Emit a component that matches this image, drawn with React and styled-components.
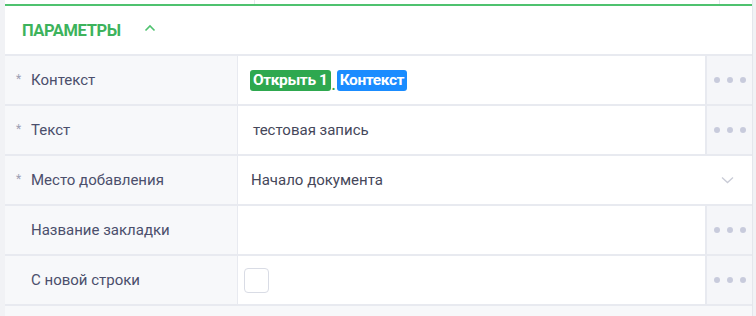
import React from 'react';
import styled, { createGlobalStyle } from 'styled-components';

const GlobalStyle = createGlobalStyle`
    html, body {
        margin: 0;
        padding: 0;
        background: #ffffff;
    }
    body {
        font-family: Roboto, "Noto Sans", sans-serif;
    }
`;

const Page = styled.div`
    display: flex;
    width: 756px;
    height: 316px;
    overflow: hidden;
    background: #f1f2f5;
`;

const Panel = styled.div`
    flex: 1;
    margin: 0 3px 0 5px;
    display: flex;
    flex-direction: column;
    background: #f7f8fa;
    border-right: 1px solid #e4e6ec;
`;

const PrevRow = styled.div`
    display: grid;
    grid-template-columns: 250px 465px 1fr;
    height: 4px;
    background: #ffffff;
`;

const PrevCell = styled.div`
    border-right: ${p => (p.$last ? 'none' : '1px solid #e6e8ee')};
`;

const Header = styled.div`
    display: flex;
    align-items: center;
    gap: 23px;
    height: 48px;
    padding-left: 17px;
    background: #ffffff;
    border-top: 2px solid #4fc26f;
`;

const Title = styled.span`
    font-size: 16.5px;
    font-weight: 700;
    color: #3db35c;
    letter-spacing: -0.4px;
`;

const Caret = styled.svg`
    width: 12px;
    height: 8px;
    margin-top: -4px;
`;

const Row = styled.div`
    display: grid;
    grid-template-columns: 232px 1fr ${p => (p.$wide ? '0px' : '47px')};
    height: 48px;
    border-top: 2px solid #e8eaf0;
`;

const LabelCell = styled.div`
    display: flex;
    align-items: center;
    background: #f7f8fa;
    padding-left: 11px;
    font-size: 15px;
    color: #4b4f6c;
`;

const Star = styled.span`
    width: 15px;
    font-size: 12px;
    color: #9da0b4;
    margin-top: -2px;
`;

const ValueCell = styled.div`
    display: flex;
    align-items: center;
    justify-content: space-between;
    background: #ffffff;
    border-left: 1px solid #e8eaf0;
    padding-left: ${p => p.$pad || 15}px;
    padding-right: 18px;
    font-size: 15px;
    color: #45475a;
`;

const MoreCell = styled.div`
    display: flex;
    align-items: center;
    justify-content: center;
    gap: 7px;
    background: #f5f6f9;
    border-left: 2px solid #e8eaf0;
`;

const Dot = styled.span`
    width: 6px;
    height: 6px;
    border-radius: 50%;
    background: #c8cbdc;
`;

const Tags = styled.div`
    display: flex;
    align-items: flex-end;
`;

const Tag = styled.span`
    display: inline-block;
    padding: 2px 3px 2px 3px;
    border-radius: 3px;
    font-size: 15.5px;
    font-weight: 700;
    line-height: 17px;
    color: #ffffff;
    background: ${p => p.$color};
    letter-spacing: -0.4px;
`;

const Sep = styled.span`
    color: #2ea84f;
    font-size: 14px;
    font-weight: 700;
    line-height: 12px;
    margin: 0 1px;
`;

const Checkbox = styled.span`
    width: 23px;
    height: 23px;
    border: 1px solid #d9dce5;
    border-radius: 4px;
    background: #ffffff;
`;

const Footer = styled.div`
    flex: 1;
    border-top: 2px solid #e8eaf0;
    background: #f7f8fa;
`;

const More = () => (
    <MoreCell>
        <Dot />
        <Dot />
        <Dot />
    </MoreCell>
);

const App = () => {
    return (
        <>
            <GlobalStyle />
            <Page>
                <Panel>
                    <PrevRow>
                        <PrevCell />
                        <PrevCell />
                        <PrevCell $last />
                    </PrevRow>
                    <Header>
                        <Title>ПАРАМЕТРЫ</Title>
                        <Caret viewBox="0 0 12 8">
                            <path d="M1.5 6.5 L6 2 L10.5 6.5" fill="none" stroke="#4fc26f" strokeWidth="1.6" />
                        </Caret>
                    </Header>
                    <Row>
                        <LabelCell><Star>*</Star>Контекст</LabelCell>
                        <ValueCell $pad={12}>
                            <Tags>
                                <Tag $color="#2ea84f">Открыть 1</Tag>
                                <Sep>.</Sep>
                                <Tag $color="#1a8cff">Контекст</Tag>
                            </Tags>
                        </ValueCell>
                        <More />
                    </Row>
                    <Row>
                        <LabelCell><Star>*</Star>Текст</LabelCell>
                        <ValueCell>тестовая запись</ValueCell>
                        <More />
                    </Row>
                    <Row $wide>
                        <LabelCell><Star>*</Star>Место добавления</LabelCell>
                        <ValueCell $pad={13}>
                            Начало документа
                            <svg width="13" height="8" viewBox="0 0 13 8">
                                <path d="M1 1.5 L6.5 6.5 L12 1.5" fill="none" stroke="#c9cbd6" strokeWidth="1.3" />
                            </svg>
                        </ValueCell>
                    </Row>
                    <Row>
                        <LabelCell><Star />Название закладки</LabelCell>
                        <ValueCell />
                        <More />
                    </Row>
                    <Row>
                        <LabelCell><Star />С новой строки</LabelCell>
                        <ValueCell $pad={6}>
                            <Checkbox />
                        </ValueCell>
                        <More />
                    </Row>
                    <Footer />
                </Panel>
            </Page>
        </>
    );
};

export default App;
